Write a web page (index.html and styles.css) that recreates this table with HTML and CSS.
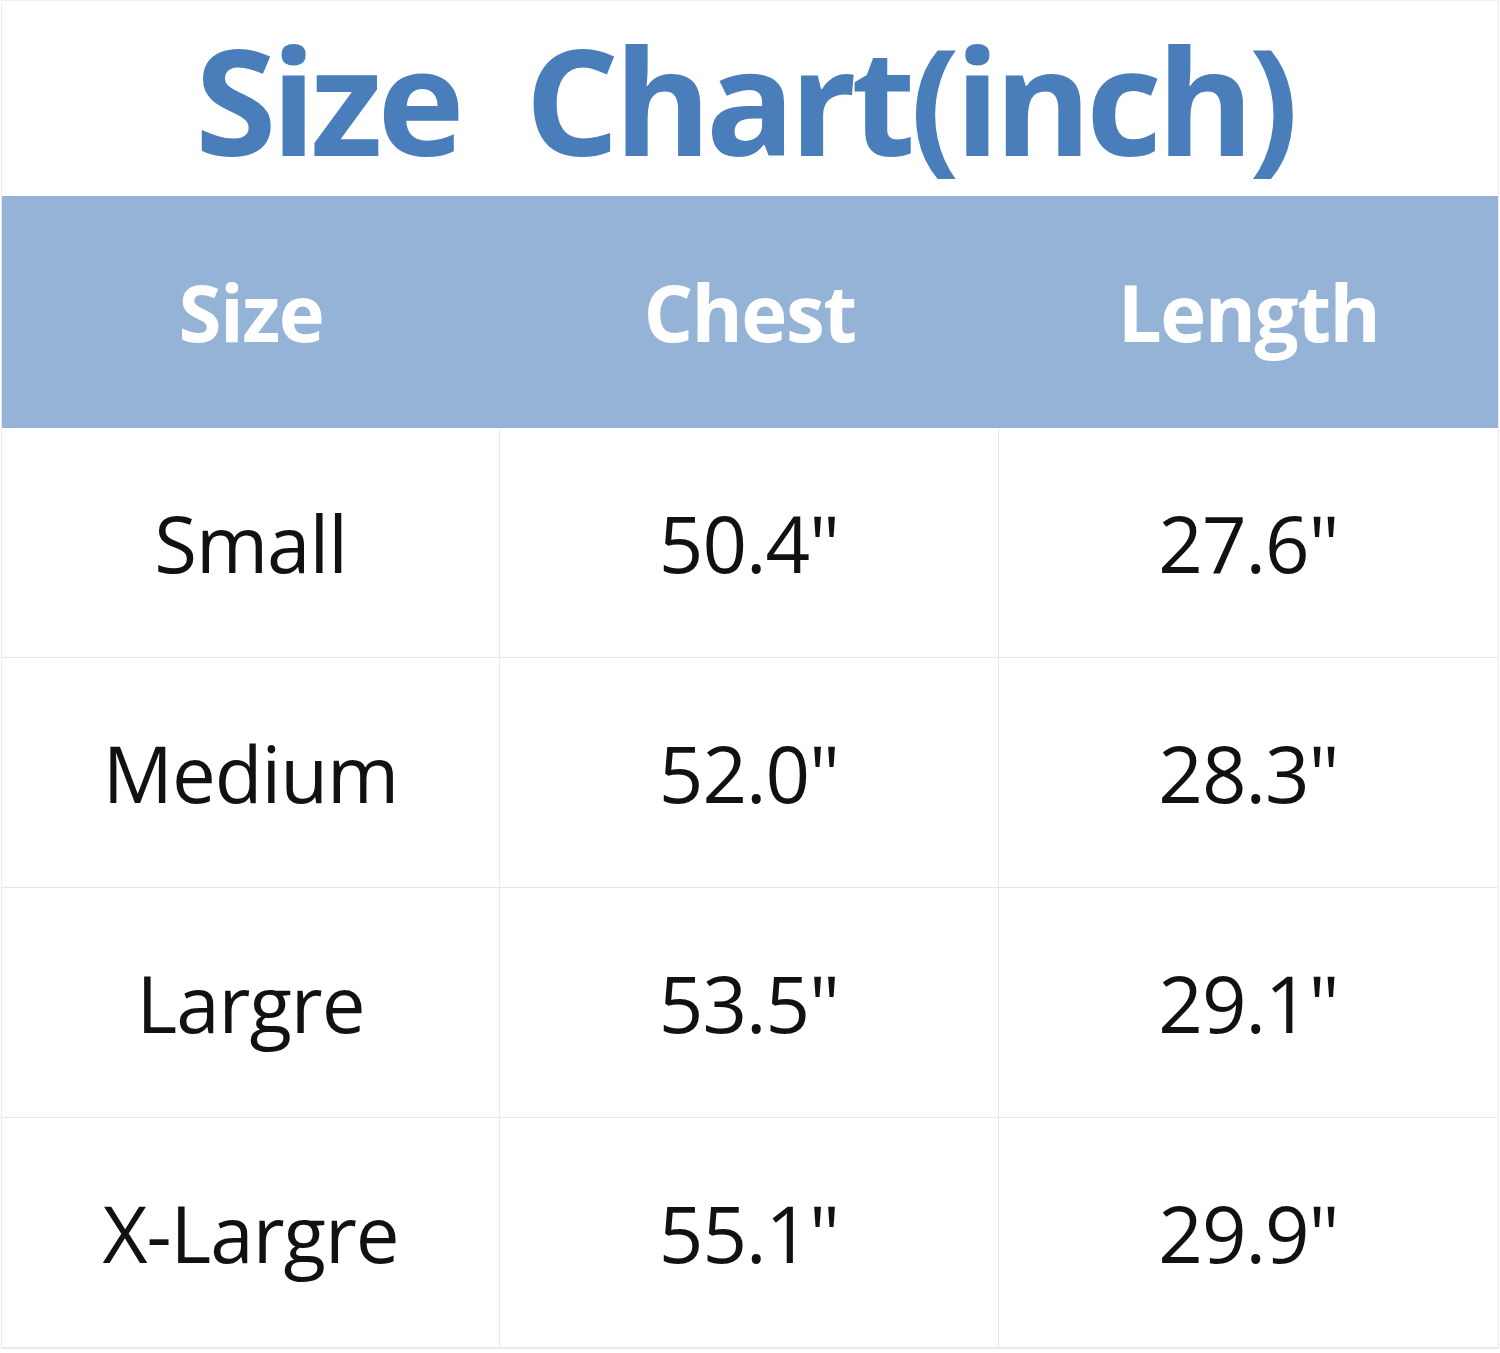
FILE: index.html
```html
<!DOCTYPE html>
<html>
<head>
<meta charset="utf-8">
<link rel="stylesheet" href="styles.css">
</head>
<body>
<div class="chart">
  <div class="title-wrap">
    <h1 class="title">Size&nbsp; Chart(inch)</h1>
  </div>
  <div class="table">
    <div class="head">Size</div>
    <div class="head">Chest</div>
    <div class="head">Length</div>
    <div class="cell">Small</div>
    <div class="cell">50.4"</div>
    <div class="cell">27.6"</div>
    <div class="cell">Medium</div>
    <div class="cell">52.0"</div>
    <div class="cell">28.3"</div>
    <div class="cell">Largre</div>
    <div class="cell">53.5"</div>
    <div class="cell">29.1"</div>
    <div class="cell">X-Largre</div>
    <div class="cell">55.1"</div>
    <div class="cell">29.9"</div>
  </div>
</div>
</body>
</html>
```

FILE: styles.css
```css
html, body {
  margin: 0;
  padding: 0;
  background: #ffffff;
}
.chart {
  width: 1496px;
  margin-left: 1px;
  border: 1px solid #ececec;
  border-top: 1px solid #f0f0f0;
  font-family: "Open Sans", "Noto Sans", sans-serif;
}
.title-wrap {
  height: 195px;
  display: flex;
  align-items: center;
  justify-content: center;
  padding-right: 12px;
  box-sizing: border-box;
}
.title {
  margin: 0;
  font-size: 148px;
  font-weight: 700;
  color: #4a7ebb;
  letter-spacing: -5.5px;
  line-height: 190px;
  white-space: nowrap;
}
.table {
  display: grid;
  grid-template-columns: 498px 499px 499px;
  grid-template-rows: 232px repeat(4, 230px);
}
.head {
  background: #95b3d7;
  color: #ffffff;
  font-weight: 700;
  font-size: 78px;
  display: flex;
  align-items: center;
  justify-content: center;
  letter-spacing: -1.5px;
}
.cell {
  display: flex;
  align-items: center;
  justify-content: center;
  font-size: 78px;
  color: #111111;
  border-right: 1px solid #e8e8e8;
  border-bottom: 1px solid #e8e8e8;
  letter-spacing: -1px;
}
.cell:nth-child(3n) {
  border-right: none;
}
```
